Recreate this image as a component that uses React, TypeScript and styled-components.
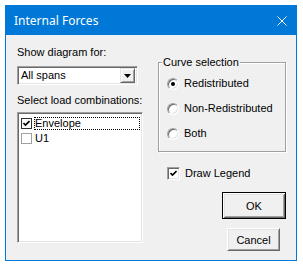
import React from "react";
import styled, { createGlobalStyle } from "styled-components";

const GlobalStyle = createGlobalStyle`
  html, body {
    margin: 0;
    padding: 0;
    background: #ffffff;
  }
  body {
    font-family: "Liberation Sans", Arial, sans-serif;
  }
`;

const Screen = styled.div`
  padding: 5px;
`;

const Window = styled.div`
  width: 292px;
  height: 256px;
  box-sizing: border-box;
  border: 1px solid #0078d7;
  background: #f0f0f0;
  display: flex;
  flex-direction: column;
`;

const TitleBar = styled.div`
  height: 29px;
  background: #0078d7;
  color: #ffffff;
  display: flex;
  align-items: center;
  justify-content: space-between;
  padding: 0 9px 0 8px;
  font-family: "Noto Sans", "Open Sans", sans-serif;
  font-size: 12px;
`;

const Client = styled.div`
  flex: 1;
  display: flex;
  gap: 15px;
  padding: 11px 10px 0 11px;
  font-size: 11px;
  line-height: 13px;
  color: #000000;
`;

const LeftCol = styled.div`
  width: 126px;
  display: flex;
  flex-direction: column;
`;

const RightCol = styled.div`
  width: 129px;
  display: flex;
  flex-direction: column;
  padding-top: 16px;
`;

const Label = styled.div<{ $gap?: number }>`
  margin-top: ${(p) => p.$gap ?? 0}px;
  white-space: nowrap;
`;

/* classic sunken 3D edge */
const Sunken = styled.div`
  box-sizing: border-box;
  background: #ffffff;
  border-style: solid;
  border-width: 1px;
  border-color: #a0a0a0 #ffffff #ffffff #a0a0a0;
  box-shadow: inset 1px 1px 0 #696969, inset -1px -1px 0 #e3e3e3;
`;

const Combo = styled(Sunken)`
  width: 121px;
  height: 19px;
  margin-top: 7px;
  display: flex;
  align-items: center;
  padding: 2px 2px 2px 3px;
`;

const ComboText = styled.span`
  flex: 1;
`;

const DropButton = styled.div`
  width: 15px;
  height: 15px;
  box-sizing: border-box;
  background: #f0f0f0;
  border-style: solid;
  border-width: 1px;
  border-color: #e3e3e3 #696969 #696969 #e3e3e3;
  box-shadow: inset 1px 1px 0 #ffffff, inset -1px -1px 0 #a0a0a0;
  display: flex;
  align-items: center;
  justify-content: center;
`;

const ListBox = styled(Sunken)`
  width: 126px;
  height: 131px;
  margin-top: 5px;
  padding: 4px 2px 2px 3px;
  display: flex;
  flex-direction: column;
  gap: 2px;
`;

const ListRow = styled.div`
  display: flex;
  align-items: center;
  gap: 2px;
  height: 13px;
`;

const ListText = styled.span<{ $focused?: boolean }>`
  flex: ${(p) => (p.$focused ? 1 : "none")};
  padding-left: 1px;
  outline: ${(p) => (p.$focused ? "1px dotted #000" : "none")};
  outline-offset: -1px;
  line-height: 13px;
`;

const FlatCheck = styled.div<{ $checked?: boolean }>`
  width: 11px;
  height: 11px;
  box-sizing: border-box;
  border: 1px solid ${(p) => (p.$checked ? "#333333" : "#a0a0a0")};
  background: #ffffff;
  display: flex;
  align-items: center;
  justify-content: center;
`;

const GroupBox = styled.div`
  position: relative;
  height: 90px;
  box-sizing: border-box;
  border: 1px solid #a0a0a0;
  box-shadow: inset 1px 1px 0 #ffffff, 1px 1px 0 #ffffff;
  padding: 14px 0 0 8px;
  display: flex;
  flex-direction: column;
  gap: 12px;
`;

const GroupTitle = styled.span`
  position: absolute;
  top: -7px;
  left: 3px;
  padding: 0 1px;
  background: #f0f0f0;
  white-space: nowrap;
`;

const OptionRow = styled.label`
  display: flex;
  align-items: center;
  gap: 5px;
  height: 13px;
  white-space: nowrap;
`;

const RadioDot = styled.span<{ $on?: boolean }>`
  width: 12px;
  height: 12px;
  box-sizing: border-box;
  border-radius: 50%;
  background: #ffffff;
  border: 1px solid;
  border-color: #a0a0a0 #ffffff #ffffff #a0a0a0;
  box-shadow: inset 1px 1px 0 #696969, inset -1px -1px 0 #e3e3e3;
  display: flex;
  align-items: center;
  justify-content: center;
  &::after {
    content: "";
    width: 4px;
    height: 4px;
    border-radius: 50%;
    background: ${(p) => (p.$on ? "#000000" : "transparent")};
  }
`;

const CheckBox3D = styled.span`
  width: 13px;
  height: 13px;
  box-sizing: border-box;
  background: #ffffff;
  border: 1px solid;
  border-color: #a0a0a0 #ffffff #ffffff #a0a0a0;
  box-shadow: inset 1px 1px 0 #696969, inset -1px -1px 0 #e3e3e3;
  display: flex;
  align-items: center;
  justify-content: center;
`;

const LegendRow = styled(OptionRow)`
  margin-top: 15px;
  padding-left: 9px;
`;

const ButtonStack = styled.div`
  margin-top: 12px;
  padding-right: 8px;
  display: flex;
  flex-direction: column;
  align-items: flex-end;
  gap: 9px;
`;

const Button = styled.button<{ $default?: boolean }>`
  width: ${(p) => (p.$default ? 64 : 53)}px;
  height: ${(p) => (p.$default ? 27 : 23)}px;
  margin-right: ${(p) => (p.$default ? -8 : -2)}px;
  box-sizing: border-box;
  font-family: "Liberation Sans", Arial, sans-serif;
  font-size: 11px;
  color: #000000;
  background: #f0f0f0;
  border-style: solid;
  border-width: 1px;
  border-color: ${(p) =>
    p.$default ? "#000000" : "#ffffff #696969 #696969 #ffffff"};
  box-shadow: ${(p) =>
    p.$default
      ? "inset 1px 1px 0 #ffffff, inset -1px -1px 0 #696969, inset 2px 2px 0 #e3e3e3, inset -2px -2px 0 #a0a0a0"
      : "inset 1px 1px 0 #e3e3e3, inset -1px -1px 0 #a0a0a0"};
  padding: 0;
`;

const Tick = ({ size = 7 }: { size?: number }) => (
  <svg width={size} height={size} viewBox="0 0 7 7">
    <path d="M0.5 3 L2.5 5 L6.5 1" fill="none" stroke="#000" strokeWidth="1.6" />
  </svg>
);

export default function App() {
  return (
    <>
      <GlobalStyle />
      <Screen>
        <Window>
          <TitleBar>
            <span>Internal Forces</span>
            <svg width="10" height="10" viewBox="0 0 10 10">
              <path d="M0.5 0.5 L9.5 9.5 M9.5 0.5 L0.5 9.5" stroke="#fff" strokeWidth="1" />
            </svg>
          </TitleBar>
          <Client>
            <LeftCol>
              <Label>Show diagram for:</Label>
              <Combo>
                <ComboText>All spans</ComboText>
                <DropButton>
                  <svg width="7" height="4" viewBox="0 0 7 4">
                    <path d="M0 0 H7 L3.5 4 Z" fill="#000" />
                  </svg>
                </DropButton>
              </Combo>
              <Label $gap={9}>Select load combinations:</Label>
              <ListBox>
                <ListRow>
                  <FlatCheck $checked>
                    <Tick />
                  </FlatCheck>
                  <ListText $focused>Envelope</ListText>
                </ListRow>
                <ListRow>
                  <FlatCheck />
                  <ListText>U1</ListText>
                </ListRow>
              </ListBox>
            </LeftCol>
            <RightCol>
              <GroupBox>
                <GroupTitle>Curve selection</GroupTitle>
                <OptionRow>
                  <RadioDot $on />
                  Redistributed
                </OptionRow>
                <OptionRow>
                  <RadioDot />
                  Non-Redistributed
                </OptionRow>
                <OptionRow>
                  <RadioDot />
                  Both
                </OptionRow>
              </GroupBox>
              <LegendRow>
                <CheckBox3D>
                  <Tick />
                </CheckBox3D>
                Draw Legend
              </LegendRow>
              <ButtonStack>
                <Button $default>OK</Button>
                <Button>Cancel</Button>
              </ButtonStack>
            </RightCol>
          </Client>
        </Window>
      </Screen>
    </>
  );
}
